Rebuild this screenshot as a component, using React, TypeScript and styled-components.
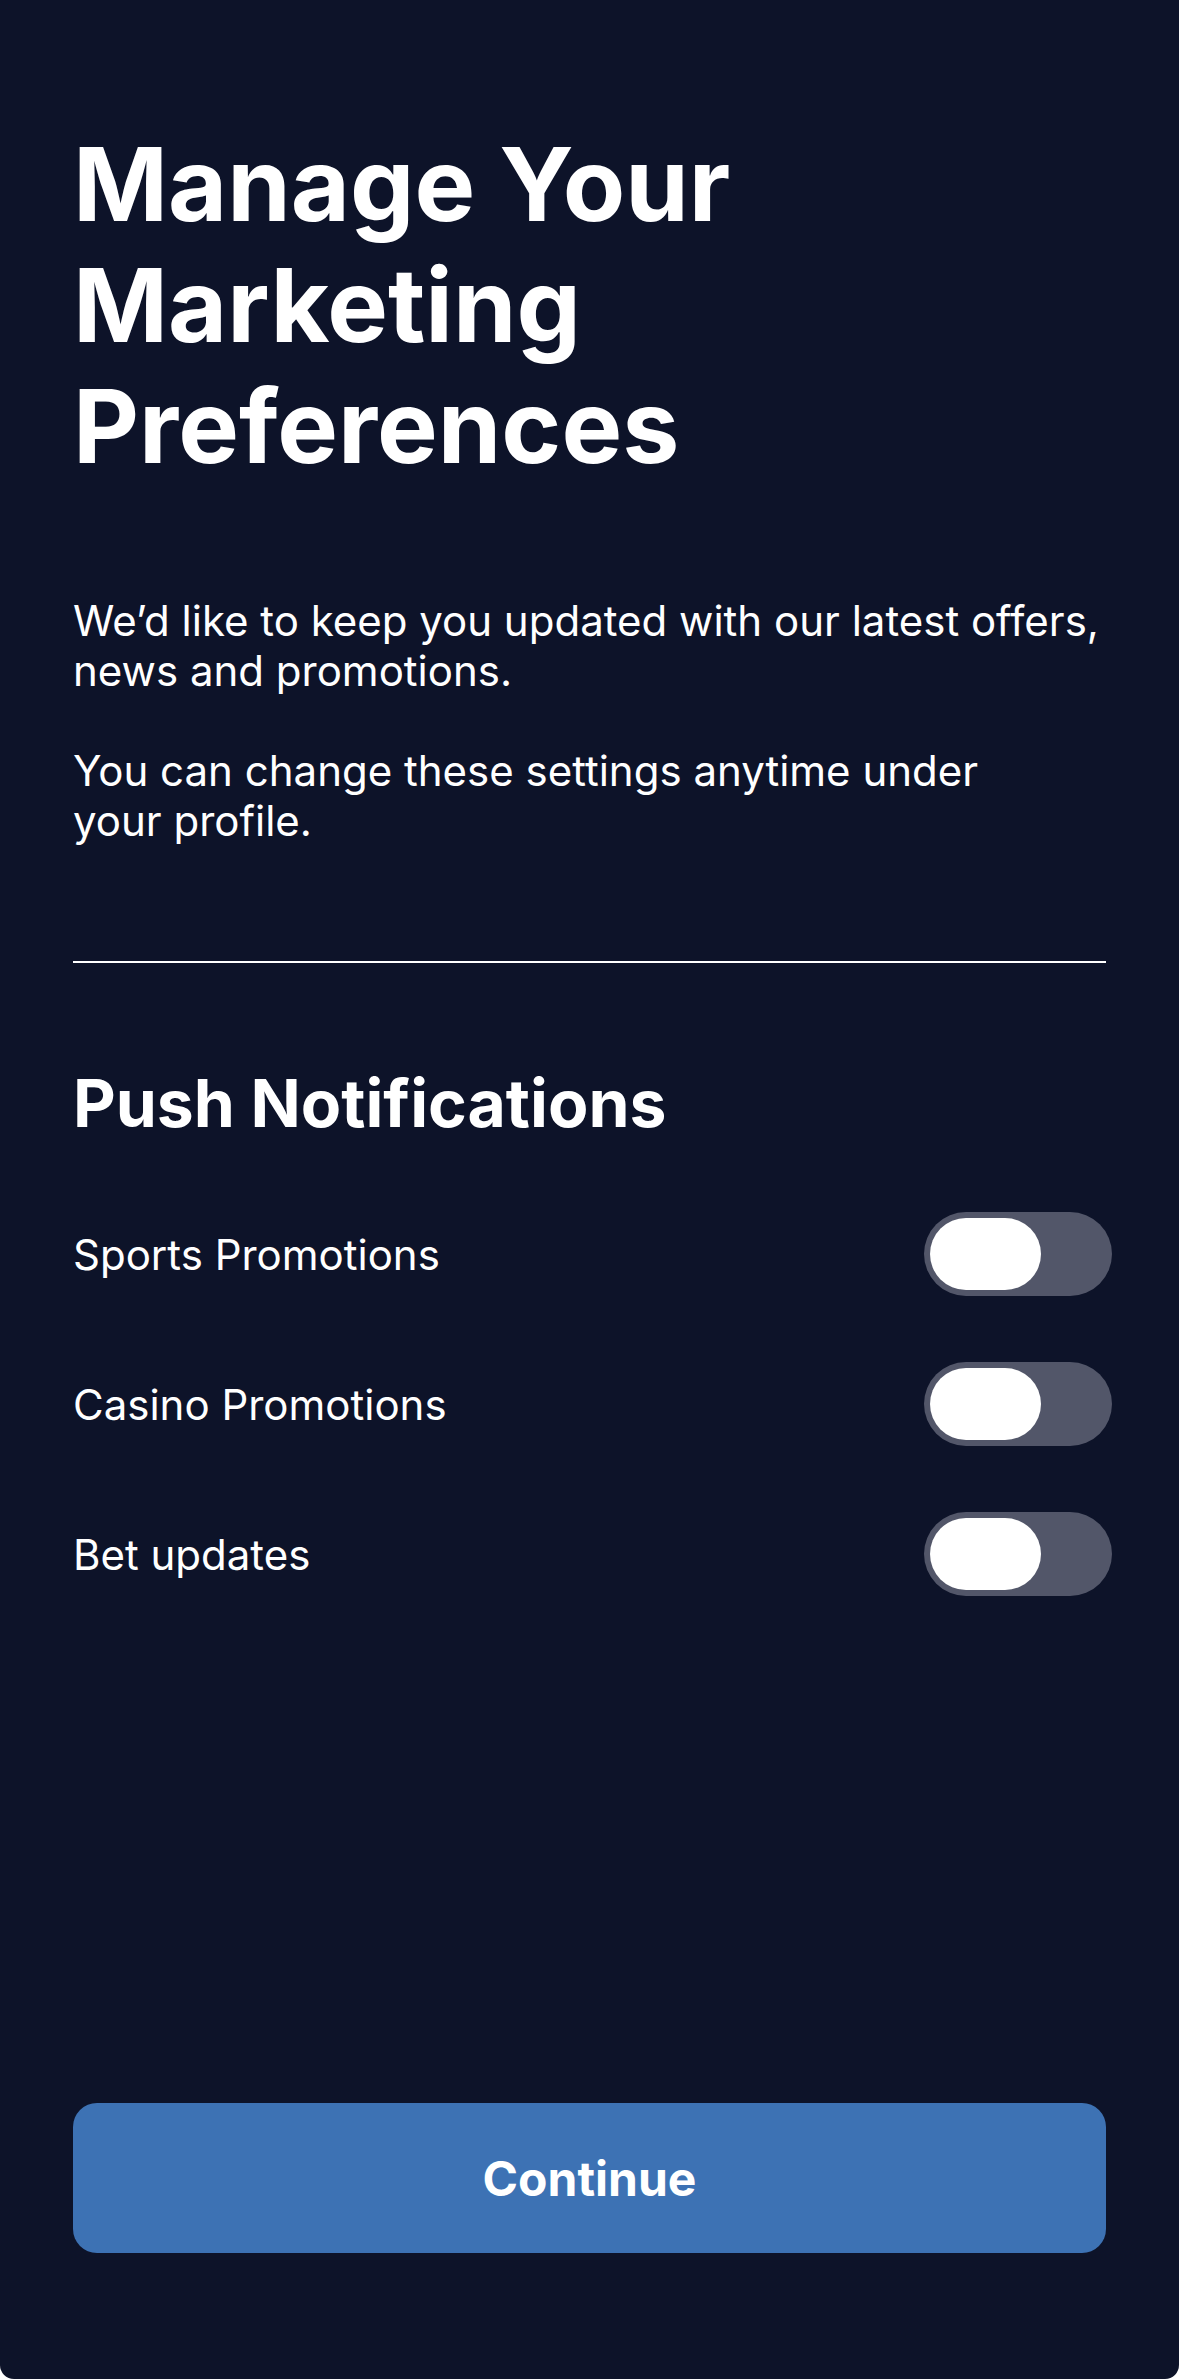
import styled, { createGlobalStyle } from "styled-components";
import * as Switch from "@radix-ui/react-switch";
import { useState } from "react";

const GlobalStyle = createGlobalStyle`
  html, body {
    margin: 0;
    padding: 0;
    background: #ffffff;
  }
  * {
    box-sizing: border-box;
  }
`;

const Page = styled.div`
  width: 1179px;
  min-height: 2379px;
  display: flex;
  flex-direction: column;
  padding: 0 73px 126px;
  background: #0d1329;
  color: #ffffff;
  font-family: Inter, "Noto Sans", sans-serif;
  border-radius: 0 0 14px 14px;
`;

const Title = styled.h1`
  margin: 124px 0 0;
  font-size: 102px;
  line-height: 121px;
  font-weight: 700;
`;

const Intro = styled.p<{ $first?: boolean }>`
  margin: ${p => (p.$first ? "109px" : "50px")} 0 0;
  font-size: 42px;
  line-height: 50px;
  font-weight: 400;
`;

const Divider = styled.hr`
  margin: 115px 0 0;
  border: none;
  height: 2px;
  background: #ffffff;
`;

const SectionTitle = styled.h2`
  margin: 100px 0 0;
  font-size: 66px;
  line-height: 80px;
  font-weight: 700;
`;

const List = styled.div`
  display: flex;
  flex-direction: column;
  gap: 66px;
  margin-top: 69px;
`;

const Row = styled.label`
  display: flex;
  align-items: center;
  justify-content: space-between;
  height: 84px;
  margin-right: -6px;
`;

const Label = styled.span`
  font-size: 42px;
  font-weight: 400;
`;

const Track = styled(Switch.Root)`
  all: unset;
  width: 188px;
  height: 84px;
  padding: 6px;
  box-sizing: border-box;
  border-radius: 42px;
  background: #525669;
  display: flex;
  align-items: center;
  cursor: pointer;

  &[data-state="checked"] {
    background: #3d72b4;
  }
`;

const Knob = styled(Switch.Thumb)`
  display: block;
  width: 111px;
  height: 72px;
  border-radius: 36px;
  background: #ffffff;
  transition: transform 200ms;

  &[data-state="checked"] {
    transform: translateX(65px);
  }
`;

const ContinueButton = styled.button`
  margin-top: auto;
  height: 150px;
  width: 100%;
  border: none;
  border-radius: 24px;
  background: #3d72b4;
  color: #ffffff;
  font-family: Inter, "Noto Sans", sans-serif;
  font-size: 48px;
  font-weight: 700;
  cursor: pointer;
`;

const options = ["Sports Promotions", "Casino Promotions", "Bet updates"];

export default function App() {
  const [checked, setChecked] = useState<Record<string, boolean>>({});

  return (
    <>
      <GlobalStyle />
      <Page>
        <Title>
          Manage Your
          <br />
          Marketing
          <br />
          Preferences
        </Title>
        <Intro $first>
          We’d like to keep you updated with our latest offers,
          <br />
          news and promotions.
        </Intro>
        <Intro>
          You can change these settings anytime under
          <br />
          your profile.
        </Intro>
        <Divider />
        <SectionTitle>Push Notifications</SectionTitle>
        <List>
          {options.map(name => (
            <Row key={name}>
              <Label>{name}</Label>
              <Track
                checked={!!checked[name]}
                onCheckedChange={v => setChecked(c => ({ ...c, [name]: v }))}
              >
                <Knob />
              </Track>
            </Row>
          ))}
        </List>
        <ContinueButton>Continue</ContinueButton>
      </Page>
    </>
  );
}
